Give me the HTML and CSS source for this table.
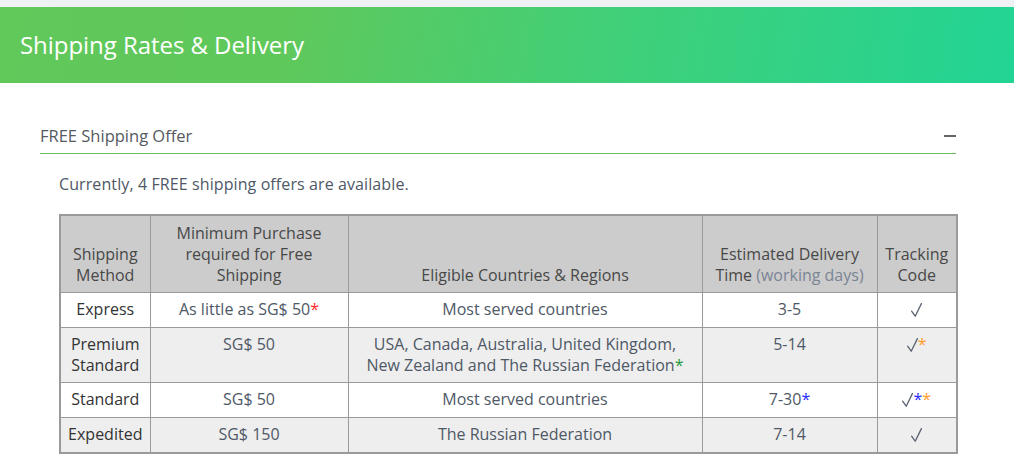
FILE: index.html
```html
<!DOCTYPE html>
<html>
<head>
<meta charset="utf-8">
<link rel="stylesheet" href="styles.css">
</head>
<body>
<div class="topbar"></div>
<header class="hero"><h1>Shipping Rates &amp; Delivery</h1></header>
<main class="content">
  <div class="offer-head">
    <span class="offer-title">FREE Shipping Offer</span>
    <span class="collapse"></span>
  </div>
  <p class="intro">Currently, 4 FREE shipping offers are available.</p>
  <table class="rates">
    <colgroup>
      <col class="c1"><col class="c2"><col class="c3"><col class="c4"><col class="c5">
    </colgroup>
    <thead>
      <tr>
        <th>Shipping Method</th>
        <th>Minimum Purchase required for Free Shipping</th>
        <th>Eligible Countries &amp; Regions</th>
        <th>Estimated Delivery Time <span class="muted">(working days)</span></th>
        <th>Tracking Code</th>
      </tr>
    </thead>
    <tbody>
      <tr>
        <td class="method">Express</td>
        <td>As little as SG$ 50<span class="red">*</span></td>
        <td>Most served countries</td>
        <td>3-5</td>
        <td class="chk"><svg class="tick" viewBox="0 0 11 14" width="11" height="14"><path d="M0.6 8.2 L4.2 13.2 L10.4 0.6"/></svg></td>
      </tr>
      <tr class="alt two">
        <td class="method">Premium Standard</td>
        <td>SG$ 50</td>
        <td class="wide">USA, Canada, Australia, United Kingdom, New Zealand and The Russian Federation<span class="green">*</span></td>
        <td>5-14</td>
        <td class="chk"><svg class="tick" viewBox="0 0 11 14" width="11" height="14"><path d="M0.6 8.2 L4.2 13.2 L10.4 0.6"/></svg><span class="orange">*</span></td>
      </tr>
      <tr>
        <td class="method">Standard</td>
        <td>SG$ 50</td>
        <td>Most served countries</td>
        <td>7-30<span class="blue">*</span></td>
        <td class="chk"><svg class="tick" viewBox="0 0 11 14" width="11" height="14"><path d="M0.6 8.2 L4.2 13.2 L10.4 0.6"/></svg><span class="blue">*</span><span class="orange">*</span></td>
      </tr>
      <tr class="alt">
        <td class="method">Expedited</td>
        <td>SG$ 150</td>
        <td>The Russian Federation</td>
        <td>7-14</td>
        <td class="chk"><svg class="tick" viewBox="0 0 11 14" width="11" height="14"><path d="M0.6 8.2 L4.2 13.2 L10.4 0.6"/></svg></td>
      </tr>
    </tbody>
  </table>
</main>
</body>
</html>
```
FILE: styles.css
```css
html, body {
  margin: 0;
  padding: 0;
  background: #ffffff;
  font-family: "Open Sans", "Noto Sans", sans-serif;
}
.topbar {
  height: 7px;
  background: #f0f1f5;
}
.hero {
  height: 76px;
  display: flex;
  align-items: center;
  padding-left: 20px;
  background: linear-gradient(100deg, #61c85a 0%, #5fc85b 28%, #3fd07a 62%, #22d494 100%);
}
.hero h1 {
  margin: 0;
  font-weight: 400;
  font-size: 24px;
  color: #ffffff;
  letter-spacing: -0.05px;
  padding-bottom: 2px;
}
.content {
  padding: 38px 58px 20px 40px;
}
.offer-head {
  display: flex;
  justify-content: space-between;
  align-items: center;
  border-bottom: 1px solid #6cbf5f;
  height: 33px;
  box-sizing: border-box;
  padding-bottom: 3px;
}
.offer-title {
  font-size: 16.5px;
  color: #555a60;
}
.collapse {
  width: 12px;
  height: 2px;
  background: #666;
  margin-top: 0;
}
.intro {
  margin: 19px 0 0 19px;
  font-size: 16px;
  letter-spacing: 0.1px;
  color: #4e5866;
}
.rates {
  margin: 19px 0 0 19px;
  width: 897px;
  border-collapse: collapse;
  border: 2px solid #9a9a9a;
  table-layout: fixed;
  font-size: 16px;
  line-height: 21px;
}
.c1 { width: 90px; }
.c2 { width: 198px; }
.c3 { width: 354px; }
.c4 { width: 175px; }
.c5 { width: 80px; }
.rates th, .rates td {
  border: 1px solid #9a9a9a;
  text-align: center;
}
.rates th {
  background: #cccccc;
  color: #484848;
  font-weight: 400;
  vertical-align: bottom;
  padding: 7px 2px 6px;
}
.rates td {
  vertical-align: top;
  padding: 6px 2px 7px;
  color: #4e5866;
}
.rates tr.two td {
  padding-bottom: 6px;
}
.rates td.wide {
  padding-left: 12px;
  padding-right: 12px;
}
.rates td.method {
  color: #333333;
}
.rates tr.alt td {
  background: #eeeeee;
}
.muted { color: #7a8494; }
.tick {
  vertical-align: -2px;
  fill: none;
  stroke: #5a6270;
  stroke-width: 1.3;
  stroke-linecap: round;
  stroke-linejoin: round;
}
.red { color: #ff2a2a; }
.green { color: #1f9a3a; }
.orange { color: #ff9c2a; }
.blue { color: #2a2aff; }
```
